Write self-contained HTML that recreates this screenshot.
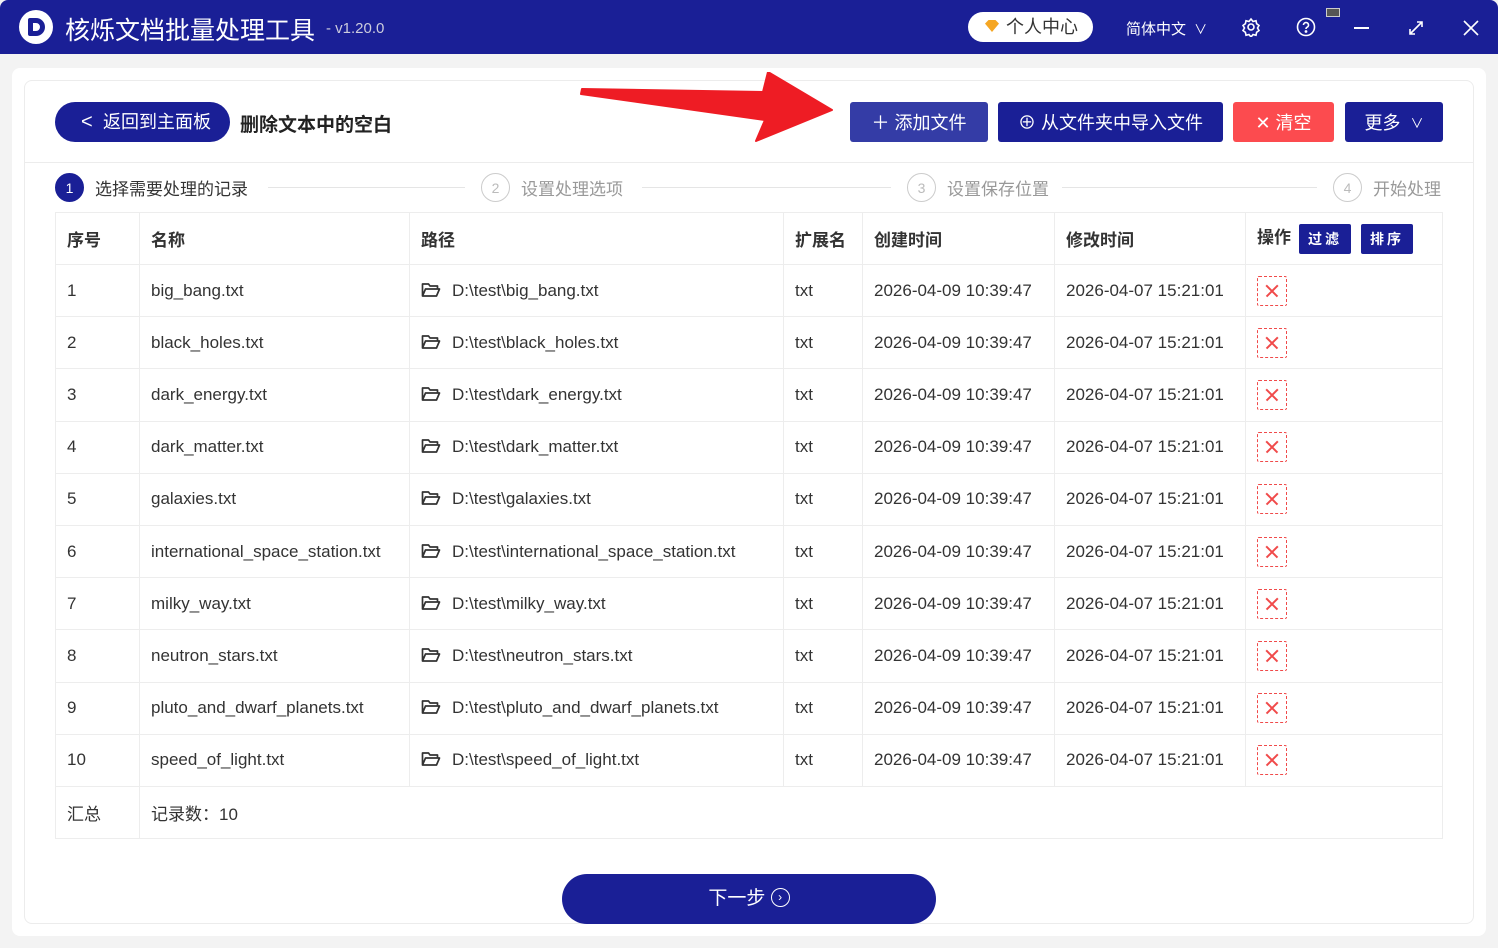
<!DOCTYPE html>
<html><head><meta charset="utf-8"><style>
*{box-sizing:border-box;margin:0;padding:0}
body{width:1498px;height:948px;background:#f3f3f3;font-family:"Liberation Sans","Noto Sans CJK SC",sans-serif;position:relative;overflow:hidden;color:#333}
.top{position:absolute;left:0;top:0;width:1498px;height:54px;background:#1a1f96;border-radius:8px 8px 0 0;color:#fff}
.abs{position:absolute}
.panel{position:absolute;left:12px;top:68px;width:1474px;height:868px;background:#fff;border-radius:8px}
.card{position:absolute;left:24px;top:80px;width:1450px;height:844px;border:1px solid #ececec;border-radius:8px;background:#fff}
.btn{position:absolute;top:102px;height:40px;color:#fff;font-size:18px;display:flex;align-items:center;justify-content:center;border-radius:3px;background:#1a1f96}
table{position:absolute;left:55px;top:212px;width:1388px;border-collapse:collapse;font-size:17px}
td,th{border:1px solid #ededed;text-align:left;padding-left:11px;font-weight:normal;color:#333;vertical-align:middle}
th{height:52px;font-weight:bold;font-size:17px}
td{height:52.2px}
.x{display:inline-block;width:30px;height:30px;border:1.5px dashed #f04a4a;border-radius:2px;position:relative;vertical-align:middle}
.x:before,.x:after{content:"";position:absolute;left:6px;top:13px;width:16px;height:1.5px;background:#f04a4a;transform:rotate(45deg)}
.x:after{transform:rotate(-45deg)}
.step{position:absolute;top:173px;font-size:17px;color:#999;display:flex;align-items:center}
.c{width:29px;height:29px;border-radius:50%;border:1.5px solid #ccc;color:#bbb;font-size:14px;display:flex;align-items:center;justify-content:center;margin-right:11px}
.line{position:absolute;top:187px;height:1px;background:#e5e5e5}
.sb{display:inline-block;background:#1a1f96;color:#fff;font-size:14px;padding:0 9px;height:30px;line-height:30px;border-radius:2px;margin-left:6px;letter-spacing:3px;vertical-align:middle}
.f{display:inline-block;width:20px;height:16px;margin-right:11px;vertical-align:-2px}
</style></head><body>
<svg width="0" height="0" style="position:absolute"><symbol id="fd" viewBox="0 0 20 16"><path d="M1.5 14V2h6l1.5 2h7.5v3M1.5 14l3-7h14l-3 7z" fill="none" stroke="#333" stroke-width="1.7" stroke-linejoin="round"/></symbol></svg>
<div class="top">
 <div class="abs" style="left:19px;top:10px;width:34px;height:34px;border-radius:50%;background:#fff;"><div class="abs" style="left:9px;top:8px;width:17px;height:18px;border:5px solid #1a1f96;border-radius:2px 9px 9px 2px"></div></div>
 <div class="abs" style="left:65px;top:11px;font-size:25px">核烁文档批量处理工具</div>
 <div class="abs" style="left:326px;top:20px;font-size:15px;color:#ccd">- v1.20.0</div>
 <div class="abs" style="left:968px;top:12px;width:125px;height:30px;border-radius:15px;background:#fff;color:#333;font-size:18px;line-height:30px;padding-left:38px">个人中心<span class="abs" style="left:17px;top:8px;width:14px;height:12px;background:#f5a623;clip-path:polygon(0 30%,25% 0,75% 0,100% 30%,50% 100%)"></span></div>
 <div class="abs" style="left:1126px;top:18px;font-size:15px">简体中文 <span style="font-size:13px;margin-left:4px">∨</span></div>
 <svg class="abs" style="left:1241px;top:17px" width="20" height="20" viewBox="0 0 20 20" fill="none" stroke="#fff" stroke-width="1.6"><circle cx="10" cy="10" r="3"/><path d="M10 2l2 2.5 3-.8.6 3 2.4 1.8-1.5 2.5 1.5 2.5-2.4 1.8-.6 3-3-.8-2 2.5-2-2.5-3 .8-.6-3L2 13.5l1.5-2.5L2 8.5l2.4-1.8.6-3 3 .8z"/></svg>
 <svg class="abs" style="left:1296px;top:17px" width="20" height="20" viewBox="0 0 20 20" fill="none" stroke="#fff" stroke-width="1.6"><circle cx="10" cy="10" r="8.5"/><path d="M7.5 8a2.5 2.5 0 1 1 3.5 2.3c-.8.4-1 1-1 1.7"/><circle cx="10" cy="14.5" r=".6" fill="#fff"/></svg>
 <div class="abs" style="left:1326px;top:8px;width:14px;height:9px;border:1.5px solid #ccc;background:#555"></div>
 <div class="abs" style="left:1354px;top:27px;width:15px;height:1.5px;background:#fff"></div>
 <svg class="abs" style="left:1408px;top:20px" width="16" height="16" viewBox="0 0 16 16" stroke="#fff" stroke-width="1.6" fill="none"><path d="M2 14L14 2M9 2h5v5M2 9v5h5"/></svg>
 <svg class="abs" style="left:1463px;top:20px" width="16" height="16" viewBox="0 0 16 16" stroke="#fff" stroke-width="1.6"><path d="M1 1l14 14M15 1L1 15"/></svg>
</div>
<div class="panel"></div>
<div class="card"></div>
<div class="abs" style="left:55px;top:102px;width:175px;height:40px;border-radius:20px;background:#1a1f96;color:#fff;font-size:18px;line-height:40px;padding-left:48px">返回到主面板<span class="abs" style="left:26px;top:0;font-size:20px">&lt;</span></div>
<div class="abs" style="left:240px;top:110px;font-size:19px;font-weight:bold;color:#222">删除文本中的空白</div>
<svg class="abs" style="left:578px;top:72px" width="256" height="70" viewBox="0 0 256 70"><path d="M4 17L185 20 190 0 254 38 178 69 187 48 3 22z" fill="#ee1c24" stroke="#ee1c24" stroke-linejoin="round" stroke-width="2"/></svg>
<div class="btn" style="left:850px;width:138px;background:#343ca6">＋ 添加文件</div>
<div class="btn" style="left:998px;width:225px">⊕ 从文件夹中导入文件</div>
<div class="btn" style="left:1233px;width:101px;background:#fc4b4f">✕ 清空</div>
<div class="btn" style="left:1345px;width:98px">更多 <span style="font-size:13px;margin-left:10px">∨</span></div>
<div class="abs" style="left:25px;top:162px;width:1448px;height:1px;background:#ececec"></div>
<div class="step" style="left:55px;color:#333"><div class="c" style="background:#1a1f96;border-color:#1a1f96;color:#fff">1</div>选择需要处理的记录</div>
<div class="line" style="left:268px;width:197px"></div>
<div class="step" style="left:481px"><div class="c">2</div>设置处理选项</div>
<div class="line" style="left:642px;width:249px"></div>
<div class="step" style="left:907px"><div class="c">3</div>设置保存位置</div>
<div class="line" style="left:1062px;width:255px"></div>
<div class="step" style="left:1333px"><div class="c">4</div>开始处理</div>
<table>
<tr><th style="width:84px">序号</th><th style="width:270px">名称</th><th style="width:374px">路径</th><th style="width:79px">扩展名</th><th style="width:192px">创建时间</th><th style="width:191px">修改时间</th><th>操作<span class="sb" style="margin-left:8px">过滤</span><span class="sb" style="margin-left:10px">排序</span></th></tr>
<tr><td>1</td><td>big_bang.txt</td><td><svg class="f"><use href="#fd"/></svg>D:\test\big_bang.txt</td><td>txt</td><td>2026-04-09 10:39:47</td><td>2026-04-07 15:21:01</td><td><span class="x"></span></td></tr>
<tr><td>2</td><td>black_holes.txt</td><td><svg class="f"><use href="#fd"/></svg>D:\test\black_holes.txt</td><td>txt</td><td>2026-04-09 10:39:47</td><td>2026-04-07 15:21:01</td><td><span class="x"></span></td></tr>
<tr><td>3</td><td>dark_energy.txt</td><td><svg class="f"><use href="#fd"/></svg>D:\test\dark_energy.txt</td><td>txt</td><td>2026-04-09 10:39:47</td><td>2026-04-07 15:21:01</td><td><span class="x"></span></td></tr>
<tr><td>4</td><td>dark_matter.txt</td><td><svg class="f"><use href="#fd"/></svg>D:\test\dark_matter.txt</td><td>txt</td><td>2026-04-09 10:39:47</td><td>2026-04-07 15:21:01</td><td><span class="x"></span></td></tr>
<tr><td>5</td><td>galaxies.txt</td><td><svg class="f"><use href="#fd"/></svg>D:\test\galaxies.txt</td><td>txt</td><td>2026-04-09 10:39:47</td><td>2026-04-07 15:21:01</td><td><span class="x"></span></td></tr>
<tr><td>6</td><td>international_space_station.txt</td><td><svg class="f"><use href="#fd"/></svg>D:\test\international_space_station.txt</td><td>txt</td><td>2026-04-09 10:39:47</td><td>2026-04-07 15:21:01</td><td><span class="x"></span></td></tr>
<tr><td>7</td><td>milky_way.txt</td><td><svg class="f"><use href="#fd"/></svg>D:\test\milky_way.txt</td><td>txt</td><td>2026-04-09 10:39:47</td><td>2026-04-07 15:21:01</td><td><span class="x"></span></td></tr>
<tr><td>8</td><td>neutron_stars.txt</td><td><svg class="f"><use href="#fd"/></svg>D:\test\neutron_stars.txt</td><td>txt</td><td>2026-04-09 10:39:47</td><td>2026-04-07 15:21:01</td><td><span class="x"></span></td></tr>
<tr><td>9</td><td>pluto_and_dwarf_planets.txt</td><td><svg class="f"><use href="#fd"/></svg>D:\test\pluto_and_dwarf_planets.txt</td><td>txt</td><td>2026-04-09 10:39:47</td><td>2026-04-07 15:21:01</td><td><span class="x"></span></td></tr>
<tr><td>10</td><td>speed_of_light.txt</td><td><svg class="f"><use href="#fd"/></svg>D:\test\speed_of_light.txt</td><td>txt</td><td>2026-04-09 10:39:47</td><td>2026-04-07 15:21:01</td><td><span class="x"></span></td></tr>
<tr><td style="height:48px">汇总</td><td colspan="6">记录数：10</td></tr>
</table>
<div class="abs" style="left:562px;top:874px;width:374px;height:50px;border-radius:25px;background:#1a1f96;color:#fff;font-size:19px;line-height:50px;text-align:center">下一步 <span style="display:inline-block;width:19px;height:19px;border:1.6px solid #fff;border-radius:50%;font-size:12px;line-height:16px;vertical-align:middle;margin-top:-3px">›</span></div>
</body></html>
